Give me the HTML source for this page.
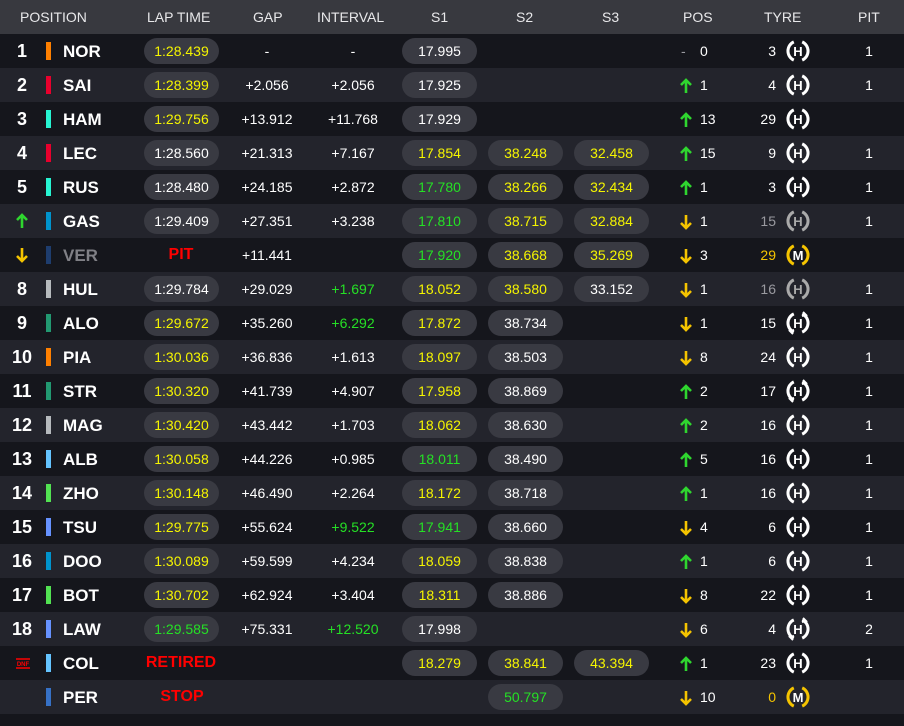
<!DOCTYPE html>
<html><head><meta charset="utf-8"><style>
*{margin:0;padding:0;box-sizing:border-box}
body{width:904px;height:726px;background:#15161c;font-family:"Liberation Sans",sans-serif;color:#fff;overflow:hidden;position:relative}
.h{position:absolute;left:0;top:0;width:904px;height:34px;background:#38393f;font-size:14px;color:#e8e8ea}
.h span{position:absolute;top:9px;white-space:nowrap}
.r{position:absolute;left:0;width:904px;height:34px;font-size:14px}
.r:nth-child(even){background:#23242c}
.r:nth-child(odd){background:#15161c}
.r>*{position:absolute}
.n{left:0;width:44px;text-align:center;top:7px;font-size:18px;font-weight:bold}
.b{left:46px;top:8px;width:5px;height:18px}
.c{left:63px;top:8px;font-size:17px;font-weight:bold}
.p{top:4px;height:26px;width:75px;border-radius:13px;background:#393a42;text-align:center;line-height:26px}
.lt{left:144px}.s1{left:402px}.s2{left:488px}.s3{left:574px}
.g{left:224px;width:86px;text-align:center;top:9px}
.i{left:310px;width:86px;text-align:center;top:9px}
.pa{left:679px;top:9px}
.pn{left:700px;top:9px}
.tn{left:736px;width:40px;text-align:right;top:9px}
.ti{left:786px;top:5px}
.pt{left:855px;width:28px;text-align:center;top:9px}
.y{color:#f5f500}.gr{color:#25e025}.gy{color:#9a9aa0}.yo{color:#f5c400}
.red{color:#f00;font-weight:bold;font-size:16px;top:8px;width:90px;text-align:center;left:136px}
</style></head><body>
<svg width="0" height="0" style="position:absolute">
<defs>
<g id="up"><path d="M7 16V3M2 8l5-5 5 5" fill="none" stroke="#2fd62f" stroke-width="2.6"/></g>
<g id="dn"><path d="M7 2v13M2 10l5 5 5-5" fill="none" stroke="#f5c400" stroke-width="2.6"/></g>
<g id="ring"><path d="M7.8 2.9A10 10 0 0 0 7.8 21.1M16.2 2.9A10 10 0 0 1 16.2 21.1" fill="none" stroke-width="3"/></g>
</defs></svg>
<div class="h"><span style="left:20px">POSITION</span><span style="left:147px">LAP TIME</span><span style="left:253px">GAP</span><span style="left:317px">INTERVAL</span><span style="left:431px">S1</span><span style="left:516px">S2</span><span style="left:602px">S3</span><span style="left:683px">POS</span><span style="left:764px">TYRE</span><span style="left:858px">PIT</span></div>
<div style="position:absolute;top:34px;left:0">
<div class="r" style="top:0"><div class="n">1</div><div class="b" style="background:#ff8000"></div><div class="c">NOR</div><div class="p lt y">1:28.439</div><div class="g">-</div><div class="i">-</div><div class="p s1">17.995</div><div class="pa gy" style="left:681px">-</div><div class="pn">0</div><div class="tn">3</div><svg class="ti" width="24" height="24"><use href="#ring" stroke="#fff"/><text x="12" y="17" text-anchor="middle" font-size="13" font-weight="bold" fill="#fff" font-family="Liberation Sans">H</text></svg><div class="pt">1</div></div>
<div class="r" style="top:34px"><div class="n">2</div><div class="b" style="background:#e8002d"></div><div class="c">SAI</div><div class="p lt y">1:28.399</div><div class="g">+2.056</div><div class="i">+2.056</div><div class="p s1">17.925</div><svg class="pa" width="14" height="18"><use href="#up"/></svg><div class="pn">1</div><div class="tn">4</div><svg class="ti" width="24" height="24"><use href="#ring" stroke="#fff"/><text x="12" y="17" text-anchor="middle" font-size="13" font-weight="bold" fill="#fff" font-family="Liberation Sans">H</text></svg><div class="pt">1</div></div>
<div class="r" style="top:68px"><div class="n">3</div><div class="b" style="background:#27f4d2"></div><div class="c">HAM</div><div class="p lt y">1:29.756</div><div class="g">+13.912</div><div class="i">+11.768</div><div class="p s1">17.929</div><svg class="pa" width="14" height="18"><use href="#up"/></svg><div class="pn">13</div><div class="tn">29</div><svg class="ti" width="24" height="24"><use href="#ring" stroke="#fff"/><text x="12" y="17" text-anchor="middle" font-size="13" font-weight="bold" fill="#fff" font-family="Liberation Sans">H</text></svg></div>
<div class="r" style="top:102px"><div class="n">4</div><div class="b" style="background:#e8002d"></div><div class="c">LEC</div><div class="p lt">1:28.560</div><div class="g">+21.313</div><div class="i">+7.167</div><div class="p s1 y">17.854</div><div class="p s2 y">38.248</div><div class="p s3 y">32.458</div><svg class="pa" width="14" height="18"><use href="#up"/></svg><div class="pn">15</div><div class="tn">9</div><svg class="ti" width="24" height="24"><use href="#ring" stroke="#fff"/><text x="12" y="17" text-anchor="middle" font-size="13" font-weight="bold" fill="#fff" font-family="Liberation Sans">H</text></svg><div class="pt">1</div></div>
<div class="r" style="top:136px"><div class="n">5</div><div class="b" style="background:#27f4d2"></div><div class="c">RUS</div><div class="p lt">1:28.480</div><div class="g">+24.185</div><div class="i">+2.872</div><div class="p s1 gr">17.780</div><div class="p s2 y">38.266</div><div class="p s3 y">32.434</div><svg class="pa" width="14" height="18"><use href="#up"/></svg><div class="pn">1</div><div class="tn">3</div><svg class="ti" width="24" height="24"><use href="#ring" stroke="#fff"/><text x="12" y="17" text-anchor="middle" font-size="13" font-weight="bold" fill="#fff" font-family="Liberation Sans">H</text></svg><div class="pt">1</div></div>
<div class="r" style="top:170px"><svg style="left:15px;top:8px" width="14" height="18"><use href="#up"/></svg><div class="b" style="background:#0093cc"></div><div class="c">GAS</div><div class="p lt">1:29.409</div><div class="g">+27.351</div><div class="i">+3.238</div><div class="p s1 gr">17.810</div><div class="p s2 y">38.715</div><div class="p s3 y">32.884</div><svg class="pa" width="14" height="18"><use href="#dn"/></svg><div class="pn">1</div><div class="tn gy">15</div><svg class="ti" width="24" height="24"><use href="#ring" stroke="#aaa"/><text x="12" y="17" text-anchor="middle" font-size="13" font-weight="bold" fill="#aaa" font-family="Liberation Sans">H</text></svg><div class="pt">1</div></div>
<div class="r" style="top:204px"><svg style="left:15px;top:8px" width="14" height="18"><use href="#dn"/></svg><div class="b" style="background:#1e3d6e"></div><div class="c" style="color:#808086">VER</div><div class="red">PIT</div><div class="g">+11.441</div><div class="p s1 gr">17.920</div><div class="p s2 y">38.668</div><div class="p s3 y">35.269</div><svg class="pa" width="14" height="18"><use href="#dn"/></svg><div class="pn">3</div><div class="tn yo">29</div><svg class="ti" width="24" height="24"><use href="#ring" stroke="#f5c400"/><text x="12" y="17" text-anchor="middle" font-size="13" font-weight="bold" fill="#fff" font-family="Liberation Sans">M</text></svg></div>
<div class="r" style="top:238px"><div class="n">8</div><div class="b" style="background:#b6babd"></div><div class="c">HUL</div><div class="p lt">1:29.784</div><div class="g">+29.029</div><div class="i gr">+1.697</div><div class="p s1 y">18.052</div><div class="p s2 y">38.580</div><div class="p s3">33.152</div><svg class="pa" width="14" height="18"><use href="#dn"/></svg><div class="pn">1</div><div class="tn gy">16</div><svg class="ti" width="24" height="24"><use href="#ring" stroke="#aaa"/><text x="12" y="17" text-anchor="middle" font-size="13" font-weight="bold" fill="#aaa" font-family="Liberation Sans">H</text></svg><div class="pt">1</div></div>
<div class="r" style="top:272px"><div class="n">9</div><div class="b" style="background:#229971"></div><div class="c">ALO</div><div class="p lt y">1:29.672</div><div class="g">+35.260</div><div class="i gr">+6.292</div><div class="p s1 y">17.872</div><div class="p s2">38.734</div><svg class="pa" width="14" height="18"><use href="#dn"/></svg><div class="pn">1</div><div class="tn">15</div><svg class="ti" width="24" height="24"><use href="#ring" stroke="#fff"/><path d="M17 1l3 3-4 1M7 23l-3-3 4-1" stroke="#fff" stroke-width="2" fill="none"/><text x="12" y="17" text-anchor="middle" font-size="13" font-weight="bold" fill="#fff" font-family="Liberation Sans">H</text></svg><div class="pt">1</div></div>
<div class="r" style="top:306px"><div class="n">10</div><div class="b" style="background:#ff8000"></div><div class="c">PIA</div><div class="p lt y">1:30.036</div><div class="g">+36.836</div><div class="i">+1.613</div><div class="p s1 y">18.097</div><div class="p s2">38.503</div><svg class="pa" width="14" height="18"><use href="#dn"/></svg><div class="pn">8</div><div class="tn">24</div><svg class="ti" width="24" height="24"><use href="#ring" stroke="#fff"/><text x="12" y="17" text-anchor="middle" font-size="13" font-weight="bold" fill="#fff" font-family="Liberation Sans">H</text></svg><div class="pt">1</div></div>
<div class="r" style="top:340px"><div class="n">11</div><div class="b" style="background:#229971"></div><div class="c">STR</div><div class="p lt y">1:30.320</div><div class="g">+41.739</div><div class="i">+4.907</div><div class="p s1 y">17.958</div><div class="p s2">38.869</div><svg class="pa" width="14" height="18"><use href="#up"/></svg><div class="pn">2</div><div class="tn">17</div><svg class="ti" width="24" height="24"><use href="#ring" stroke="#fff"/><path d="M17 1l3 3-4 1M7 23l-3-3 4-1" stroke="#fff" stroke-width="2" fill="none"/><text x="12" y="17" text-anchor="middle" font-size="13" font-weight="bold" fill="#fff" font-family="Liberation Sans">H</text></svg><div class="pt">1</div></div>
<div class="r" style="top:374px"><div class="n">12</div><div class="b" style="background:#b6babd"></div><div class="c">MAG</div><div class="p lt y">1:30.420</div><div class="g">+43.442</div><div class="i">+1.703</div><div class="p s1 y">18.062</div><div class="p s2">38.630</div><svg class="pa" width="14" height="18"><use href="#up"/></svg><div class="pn">2</div><div class="tn">16</div><svg class="ti" width="24" height="24"><use href="#ring" stroke="#fff"/><text x="12" y="17" text-anchor="middle" font-size="13" font-weight="bold" fill="#fff" font-family="Liberation Sans">H</text></svg><div class="pt">1</div></div>
<div class="r" style="top:408px"><div class="n">13</div><div class="b" style="background:#64c4ff"></div><div class="c">ALB</div><div class="p lt y">1:30.058</div><div class="g">+44.226</div><div class="i">+0.985</div><div class="p s1 gr">18.011</div><div class="p s2">38.490</div><svg class="pa" width="14" height="18"><use href="#up"/></svg><div class="pn">5</div><div class="tn">16</div><svg class="ti" width="24" height="24"><use href="#ring" stroke="#fff"/><text x="12" y="17" text-anchor="middle" font-size="13" font-weight="bold" fill="#fff" font-family="Liberation Sans">H</text></svg><div class="pt">1</div></div>
<div class="r" style="top:442px"><div class="n">14</div><div class="b" style="background:#52e252"></div><div class="c">ZHO</div><div class="p lt y">1:30.148</div><div class="g">+46.490</div><div class="i">+2.264</div><div class="p s1 y">18.172</div><div class="p s2">38.718</div><svg class="pa" width="14" height="18"><use href="#up"/></svg><div class="pn">1</div><div class="tn">16</div><svg class="ti" width="24" height="24"><use href="#ring" stroke="#fff"/><text x="12" y="17" text-anchor="middle" font-size="13" font-weight="bold" fill="#fff" font-family="Liberation Sans">H</text></svg><div class="pt">1</div></div>
<div class="r" style="top:476px"><div class="n">15</div><div class="b" style="background:#6692ff"></div><div class="c">TSU</div><div class="p lt y">1:29.775</div><div class="g">+55.624</div><div class="i gr">+9.522</div><div class="p s1 gr">17.941</div><div class="p s2">38.660</div><svg class="pa" width="14" height="18"><use href="#dn"/></svg><div class="pn">4</div><div class="tn">6</div><svg class="ti" width="24" height="24"><use href="#ring" stroke="#fff"/><text x="12" y="17" text-anchor="middle" font-size="13" font-weight="bold" fill="#fff" font-family="Liberation Sans">H</text></svg><div class="pt">1</div></div>
<div class="r" style="top:510px"><div class="n">16</div><div class="b" style="background:#0093cc"></div><div class="c">DOO</div><div class="p lt y">1:30.089</div><div class="g">+59.599</div><div class="i">+4.234</div><div class="p s1 y">18.059</div><div class="p s2">38.838</div><svg class="pa" width="14" height="18"><use href="#up"/></svg><div class="pn">1</div><div class="tn">6</div><svg class="ti" width="24" height="24"><use href="#ring" stroke="#fff"/><text x="12" y="17" text-anchor="middle" font-size="13" font-weight="bold" fill="#fff" font-family="Liberation Sans">H</text></svg><div class="pt">1</div></div>
<div class="r" style="top:544px"><div class="n">17</div><div class="b" style="background:#52e252"></div><div class="c">BOT</div><div class="p lt y">1:30.702</div><div class="g">+62.924</div><div class="i">+3.404</div><div class="p s1 y">18.311</div><div class="p s2">38.886</div><svg class="pa" width="14" height="18"><use href="#dn"/></svg><div class="pn">8</div><div class="tn">22</div><svg class="ti" width="24" height="24"><use href="#ring" stroke="#fff"/><text x="12" y="17" text-anchor="middle" font-size="13" font-weight="bold" fill="#fff" font-family="Liberation Sans">H</text></svg><div class="pt">1</div></div>
<div class="r" style="top:578px"><div class="n">18</div><div class="b" style="background:#6692ff"></div><div class="c">LAW</div><div class="p lt gr">1:29.585</div><div class="g">+75.331</div><div class="i gr">+12.520</div><div class="p s1">17.998</div><svg class="pa" width="14" height="18"><use href="#dn"/></svg><div class="pn">6</div><div class="tn">4</div><svg class="ti" width="24" height="24"><use href="#ring" stroke="#fff"/><path d="M17 1l3 3-4 1M7 23l-3-3 4-1" stroke="#fff" stroke-width="2" fill="none"/><text x="12" y="17" text-anchor="middle" font-size="13" font-weight="bold" fill="#fff" font-family="Liberation Sans">H</text></svg><div class="pt">2</div></div>
<div class="r" style="top:612px"><svg style="left:15px;top:12px" width="16" height="12"><path d="M1 1h14M1 10h14" stroke="#f00" stroke-width="1.5"/><text x="8" y="8" text-anchor="middle" font-size="6" font-weight="bold" fill="#f00" font-family="Liberation Sans">DNF</text></svg><div class="b" style="background:#64c4ff"></div><div class="c">COL</div><div class="red">RETIRED</div><div class="p s1 y">18.279</div><div class="p s2 y">38.841</div><div class="p s3 y">43.394</div><svg class="pa" width="14" height="18"><use href="#up"/></svg><div class="pn">1</div><div class="tn">23</div><svg class="ti" width="24" height="24"><use href="#ring" stroke="#fff"/><text x="12" y="17" text-anchor="middle" font-size="13" font-weight="bold" fill="#fff" font-family="Liberation Sans">H</text></svg><div class="pt">1</div></div>
<div class="r" style="top:646px"><div class="b" style="background:#3671c6"></div><div class="c">PER</div><div class="red" style="left:137px">STOP</div><div class="p s2 gr">50.797</div><svg class="pa" width="14" height="18"><use href="#dn"/></svg><div class="pn">10</div><div class="tn yo">0</div><svg class="ti" width="24" height="24"><use href="#ring" stroke="#f5c400"/><text x="12" y="17" text-anchor="middle" font-size="13" font-weight="bold" fill="#fff" font-family="Liberation Sans">M</text></svg></div>
</div>
</body></html>
